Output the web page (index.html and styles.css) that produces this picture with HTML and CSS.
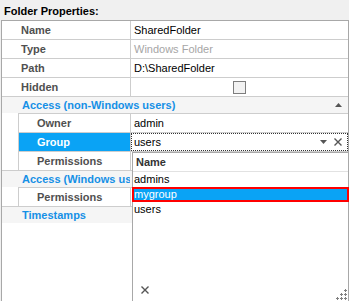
FILE: index.html
```html
<!DOCTYPE html>
<html lang="en">
<head>
    <meta charset="UTF-8">
    <title>Folder Properties</title>
    <link rel="stylesheet" href="styles.css">
</head>
<body>

<div class="title">Folder Properties:</div>

<div class="grid">
    <div class="row">
        <div class="label">Name</div>
        <div class="value">SharedFolder</div>
    </div>
    <div class="row">
        <div class="label">Type</div>
        <div class="value muted">Windows Folder</div>
    </div>
    <div class="row">
        <div class="label">Path</div>
        <div class="value">D:\SharedFolder</div>
    </div>
    <div class="row">
        <div class="label">Hidden</div>
        <div class="value center"><span class="checkbox"></span></div>
    </div>

    <div class="group">
        <div class="category">
            <span>Access (non-Windows users)</span>
            <svg class="collapse" width="7" height="4" viewBox="0 0 7 4"><path d="M0 4 L3.5 0 L7 4 Z" fill="#555"/></svg>
        </div>
        <div class="items">
            <div class="row">
                <div class="label">Owner</div>
                <div class="value">admin</div>
            </div>
            <div class="row selected">
                <div class="label">Group</div>
                <div class="value editor">
                    <span>users</span>
                    <span class="editor-buttons">
                        <svg width="7" height="4" viewBox="0 0 7 4"><path d="M0 0 L7 0 L3.5 4 Z" fill="#555"/></svg>
                        <svg width="8" height="8" viewBox="0 0 8 8"><path d="M0.5 0.5 L7.5 7.5 M7.5 0.5 L0.5 7.5" stroke="#555" stroke-width="1.4"/></svg>
                    </span>
                </div>
            </div>
            <div class="row">
                <div class="label">Permissions</div>
                <div class="value"></div>
            </div>
        </div>
    </div>

    <div class="group">
        <div class="category">
            <!-- the open popup hides the rest of this caption -->
            <span class="clipped">Access (Windows users)</span>
        </div>
        <div class="items">
            <div class="row">
                <div class="label">Permissions</div>
                <div class="value"></div>
            </div>
        </div>
    </div>

    <div class="category">
        <span>Timestamps</span>
    </div>

    <!-- lookup popup for the Group editor -->
    <div class="dropdown">
        <div class="dropdown-header">Name</div>
        <div class="dropdown-item">admins</div>
        <div class="dropdown-item active">mygroup</div>
        <div class="dropdown-item">users</div>
        <svg class="dropdown-clear" width="8" height="8" viewBox="0 0 8 8"><path d="M0.5 0.5 L7.5 7.5 M7.5 0.5 L0.5 7.5" stroke="#555" stroke-width="1.4"/></svg>
        <svg class="grip" width="11" height="11" viewBox="0 0 11 11" fill="#808080">
            <path d="M9 0h1v3h-1z M8 1h3v1h-3z"/>
            <path d="M5 4h1v3h-1z M4 5h3v1h-3z"/>
            <path d="M9 4h1v3h-1z M8 5h3v1h-3z"/>
            <path d="M1 8h1v3h-1z M0 9h3v1h-3z"/>
            <path d="M5 8h1v3h-1z M4 9h3v1h-3z"/>
            <path d="M9 8h1v3h-1z M8 9h3v1h-3z"/>
        </svg>
    </div>
</div>

</body>
</html>
```

FILE: styles.css
```css
body {
    margin: 0;
    background-color: #f0f0f0;
    font-family: "Liberation Sans", Arial, sans-serif;
    font-size: 11px;
    color: #000;
    overflow: hidden;
}

.title {
    height: 20px;
    box-sizing: border-box;
    padding: 4px 0 0 4px;
    line-height: 14px;
    font-weight: bold;
}

.grid {
    position: relative;
    margin-left: 1px;
    height: 290px;
    border: 1px solid #a8a8a8;
    background-color: #fff;
}

.row {
    display: flex;
    height: 18px;
    line-height: 18px;
    border-bottom: 1px solid #cdcdcd;
}

.label {
    width: 129px;
    box-sizing: border-box;
    padding-left: 19px;
    border-right: 1px solid #cdcdcd;
    font-weight: bold;
    color: #505050;
}

.value {
    flex: 1;
    padding-left: 3px;
}

.muted {
    color: #a6a6a6;
}

.center {
    display: flex;
    justify-content: center;
    align-items: center;
    padding-left: 0;
}

.checkbox {
    width: 11px;
    height: 11px;
    border: 1px solid #7d7d7d;
    background-color: #f2f2f2;
}

.category {
    display: flex;
    align-items: center;
    height: 16px;
    padding-left: 20px;
    background-color: #f5f5f5;
    color: #1590e6;
    font-weight: bold;
}

.clipped {
    max-width: 108px;
    overflow: hidden;
    white-space: nowrap;
}

.collapse {
    margin-left: auto;
    margin-right: 6px;
}

.group {
    border-bottom: 1px solid #cdcdcd;
}

.items {
    margin-left: 16px;
    border-left: 1px solid #cdcdcd;
}

.items .row {
    border-bottom: none;
    border-top: 1px solid #cdcdcd;
}

.items .label {
    width: 112px;
    padding-left: 18px;
}

.selected .label {
    background-color: #0aa3f5;
    color: #fff;
}

.editor {
    display: flex;
    align-items: center;
    box-sizing: border-box;
    padding-left: 2px;
    border: 1px dotted #333;
}

.editor-buttons {
    display: flex;
    align-items: center;
    gap: 7px;
    margin-left: auto;
    margin-right: 5px;
}

.dropdown {
    position: absolute;
    left: 130px;
    right: -1px;
    top: 131px;
    height: 149px;
    border: 1px solid #a8a8a8;
    background-color: #fff;
}

.dropdown-header {
    height: 18px;
    line-height: 18px;
    padding-left: 3px;
    border-bottom: 1px solid #e2e2e2;
    font-weight: bold;
    color: #333;
}

.dropdown-item {
    height: 15px;
    line-height: 15px;
    padding-left: 1px;
}

.dropdown-item.active {
    margin: 0 -1px;
    padding-left: 2px;
    background-color: #0aa3f5;
    box-shadow: inset 0 0 0 2px #f00;
    color: #fff;
}

.dropdown-clear {
    position: absolute;
    left: 8px;
    bottom: 8px;
}

.grip {
    position: absolute;
    right: 1px;
    bottom: 2px;
}
```
